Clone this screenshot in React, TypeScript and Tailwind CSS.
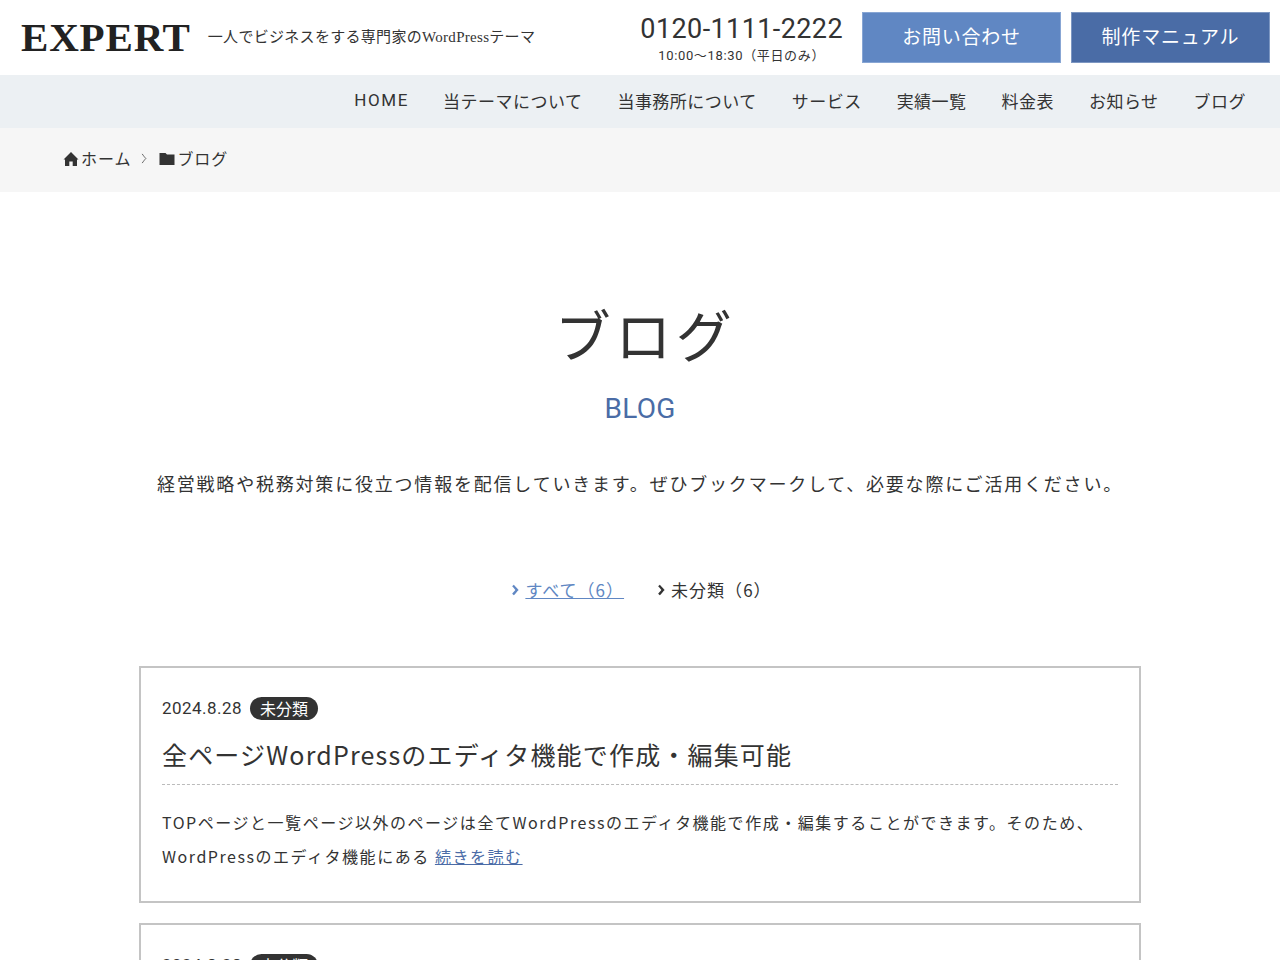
import React from "react";

const sans = "font-['Noto_Sans_CJK_JP','Noto_Sans',sans-serif]";

function Chevron({ className }: { className?: string }) {
  return (
    <svg viewBox="0 0 8 12" className={className} fill="none" stroke="currentColor" strokeWidth="2.4">
      <path d="M2 1.5 C4 3.5 5 5 6 6 C5 7 4 8.5 2 10.5" />
    </svg>
  );
}

const nav = ["当テーマについて", "当事務所について", "サービス", "実績一覧", "料金表", "お知らせ", "ブログ"];

function Card({ clipped }: { clipped?: boolean }) {
  return (
    <article className="border-2 border-[#c4c4c4] px-[21px] pt-[28px] pb-[28px]">
      <div className="flex items-center h-[24px]">
        <span className="pt-[1px] font-['Roboto','Noto_Sans_CJK_JP',sans-serif] text-[17px] tracking-[0.027em] text-[#333]">2024.8.28</span>
        <span className="ml-[8px] h-[23px] w-[68px] rounded-full bg-[#333] text-white text-[16px] leading-[23px] text-center">未分類</span>
      </div>
      {!clipped && (
        <>
          <h2 className="mt-[18px] text-[25px] leading-[32px] tracking-[0.047em] text-[#333] font-normal pb-[14px] border-b border-dashed border-[#bbbbbb]">
            全ページWordPressのエディタ機能で作成・編集可能
          </h2>
          <p className="mt-[20px] text-[16px] leading-[34px] tracking-[0.096em] text-[#333]">
            TOPページと一覧ページ以外のページは全てWordPressのエディタ機能で作成・編集することができます。そのため、
            <br />
            WordPressのエディタ機能にある <a className="text-[#4b6ca7] underline">続きを読む</a>
          </p>
        </>
      )}
    </article>
  );
}

export default function App() {
  return (
    <div className={`h-[960px] overflow-hidden bg-white text-[#333] ${sans}`}>
      <header className="h-[75px] flex items-center pl-[21px] pr-[10px]">
        <div className="font-['Liberation_Serif','Noto_Sans_CJK_JP',serif] font-bold text-[41px] leading-none tracking-[0.02em] text-[#222]">EXPERT</div>
        <div className="ml-[17px] font-['Liberation_Serif','Noto_Sans_CJK_JP',serif] text-[15px] tracking-[0.02em] text-[#333]">一人でビジネスをする専門家のWordPressテーマ</div>
        <div className="ml-auto mr-[19px] pt-[3px] flex flex-col items-center font-['Roboto','Noto_Sans_CJK_JP',sans-serif]">
          <div className="text-[27px] leading-[34px] tracking-[0.015em] text-[#333]">0120-1111-2222</div>
          <div className="text-[13px] leading-[20px] tracking-[0.05em] text-[#333]">10:00〜18:30（平日のみ）</div>
        </div>
        <a className="w-[199px] h-[51px] pb-[2px] flex items-center justify-center bg-[#6087c3] border border-[#88a6d4] text-white text-[19px] tracking-[0.04em]">お問い合わせ</a>
        <a className="ml-[10px] w-[199px] h-[51px] pb-[2px] flex items-center justify-center bg-[#4a6ca6] border border-[#7d97c2] text-white text-[19px] tracking-[0.04em]">制作マニュアル</a>
      </header>

      <nav className="h-[53px] pb-[2px] bg-[#ecf0f3] flex items-center justify-end pr-[34px] gap-[35px]">
        <a className="-mr-[1px] font-['Roboto','Noto_Sans_CJK_JP',sans-serif] text-[17px] tracking-[0.095em] text-[#333]">HOME</a>
        {nav.map((n) => (
          <a key={n} className="text-[17px] tracking-[0.028em] text-[#333]">{n}</a>
        ))}
      </nav>

      <div className="h-[64px] pb-[4px] bg-[#f6f6f6] flex items-center pl-[63px] text-[16px] tracking-[0.06em] text-[#333]">
        <svg viewBox="0 0 16 16" className="w-[16px] h-[16px] mr-[2px] mt-[1px]" fill="#333">
          <path d="M8 1 L15.5 8.5 L14 8.5 V15 H9.7 V10.5 H6.3 V15 H2 V8.5 H.5 Z" />
        </svg>
        <span>ホーム</span>
        <svg viewBox="0 0 8 12" className="w-[8px] h-[11px] ml-[9px] mr-[11px] mt-[1px]" fill="none" stroke="#555" strokeWidth="1">
          <path d="M2 1 C3.5 3 5 5 6 6 C5 7 3.5 9 2 11" />
        </svg>
        <svg viewBox="0 0 16 16" className="w-[16px] h-[16px] mr-[2px] mt-[1px]" fill="#333">
          <path d="M.5 2 H6.5 L8 3.5 H15.5 V14 H.5 Z" />
        </svg>
        <span>ブログ</span>
      </div>

      <main>
        <h1 className="mt-[109px] pl-[11px] text-center font-['Liberation_Serif','Noto_Sans_CJK_JP',serif] font-normal text-[56px] leading-[74px] tracking-[0.08em] text-[#333]">ブログ</h1>
        <div className="mt-[16px] text-center font-['Roboto','Noto_Sans_CJK_JP',sans-serif] text-[28px] leading-[36px] tracking-[0.01em] text-[#4a6ca6]">BLOG</div>
        <p className="mt-[40px] text-center text-[18px] leading-[32px] tracking-[0.1em] text-[#333]">
          経営戦略や税務対策に役立つ情報を配信していきます。ぜひブックマークして、必要な際にご活用ください。
        </p>
        <div className="mt-[77px] pl-[3px] flex justify-center gap-[33px] text-[17px] leading-[28px] tracking-[0.06em]">
          <div className="flex items-center text-[#6087c3]">
            <Chevron className="w-[8px] h-[12px] mr-[6px]" />
            <a className="underline">すべて（6）</a>
          </div>
          <div className="flex items-center text-[#333]">
            <Chevron className="w-[8px] h-[12px] mr-[6px]" />
            <a>未分類（6）</a>
          </div>
        </div>
        <div className="mt-[62px] mx-[139px] flex flex-col gap-[20px]">
          <Card />
          <Card clipped />
        </div>
      </main>
    </div>
  );
}
